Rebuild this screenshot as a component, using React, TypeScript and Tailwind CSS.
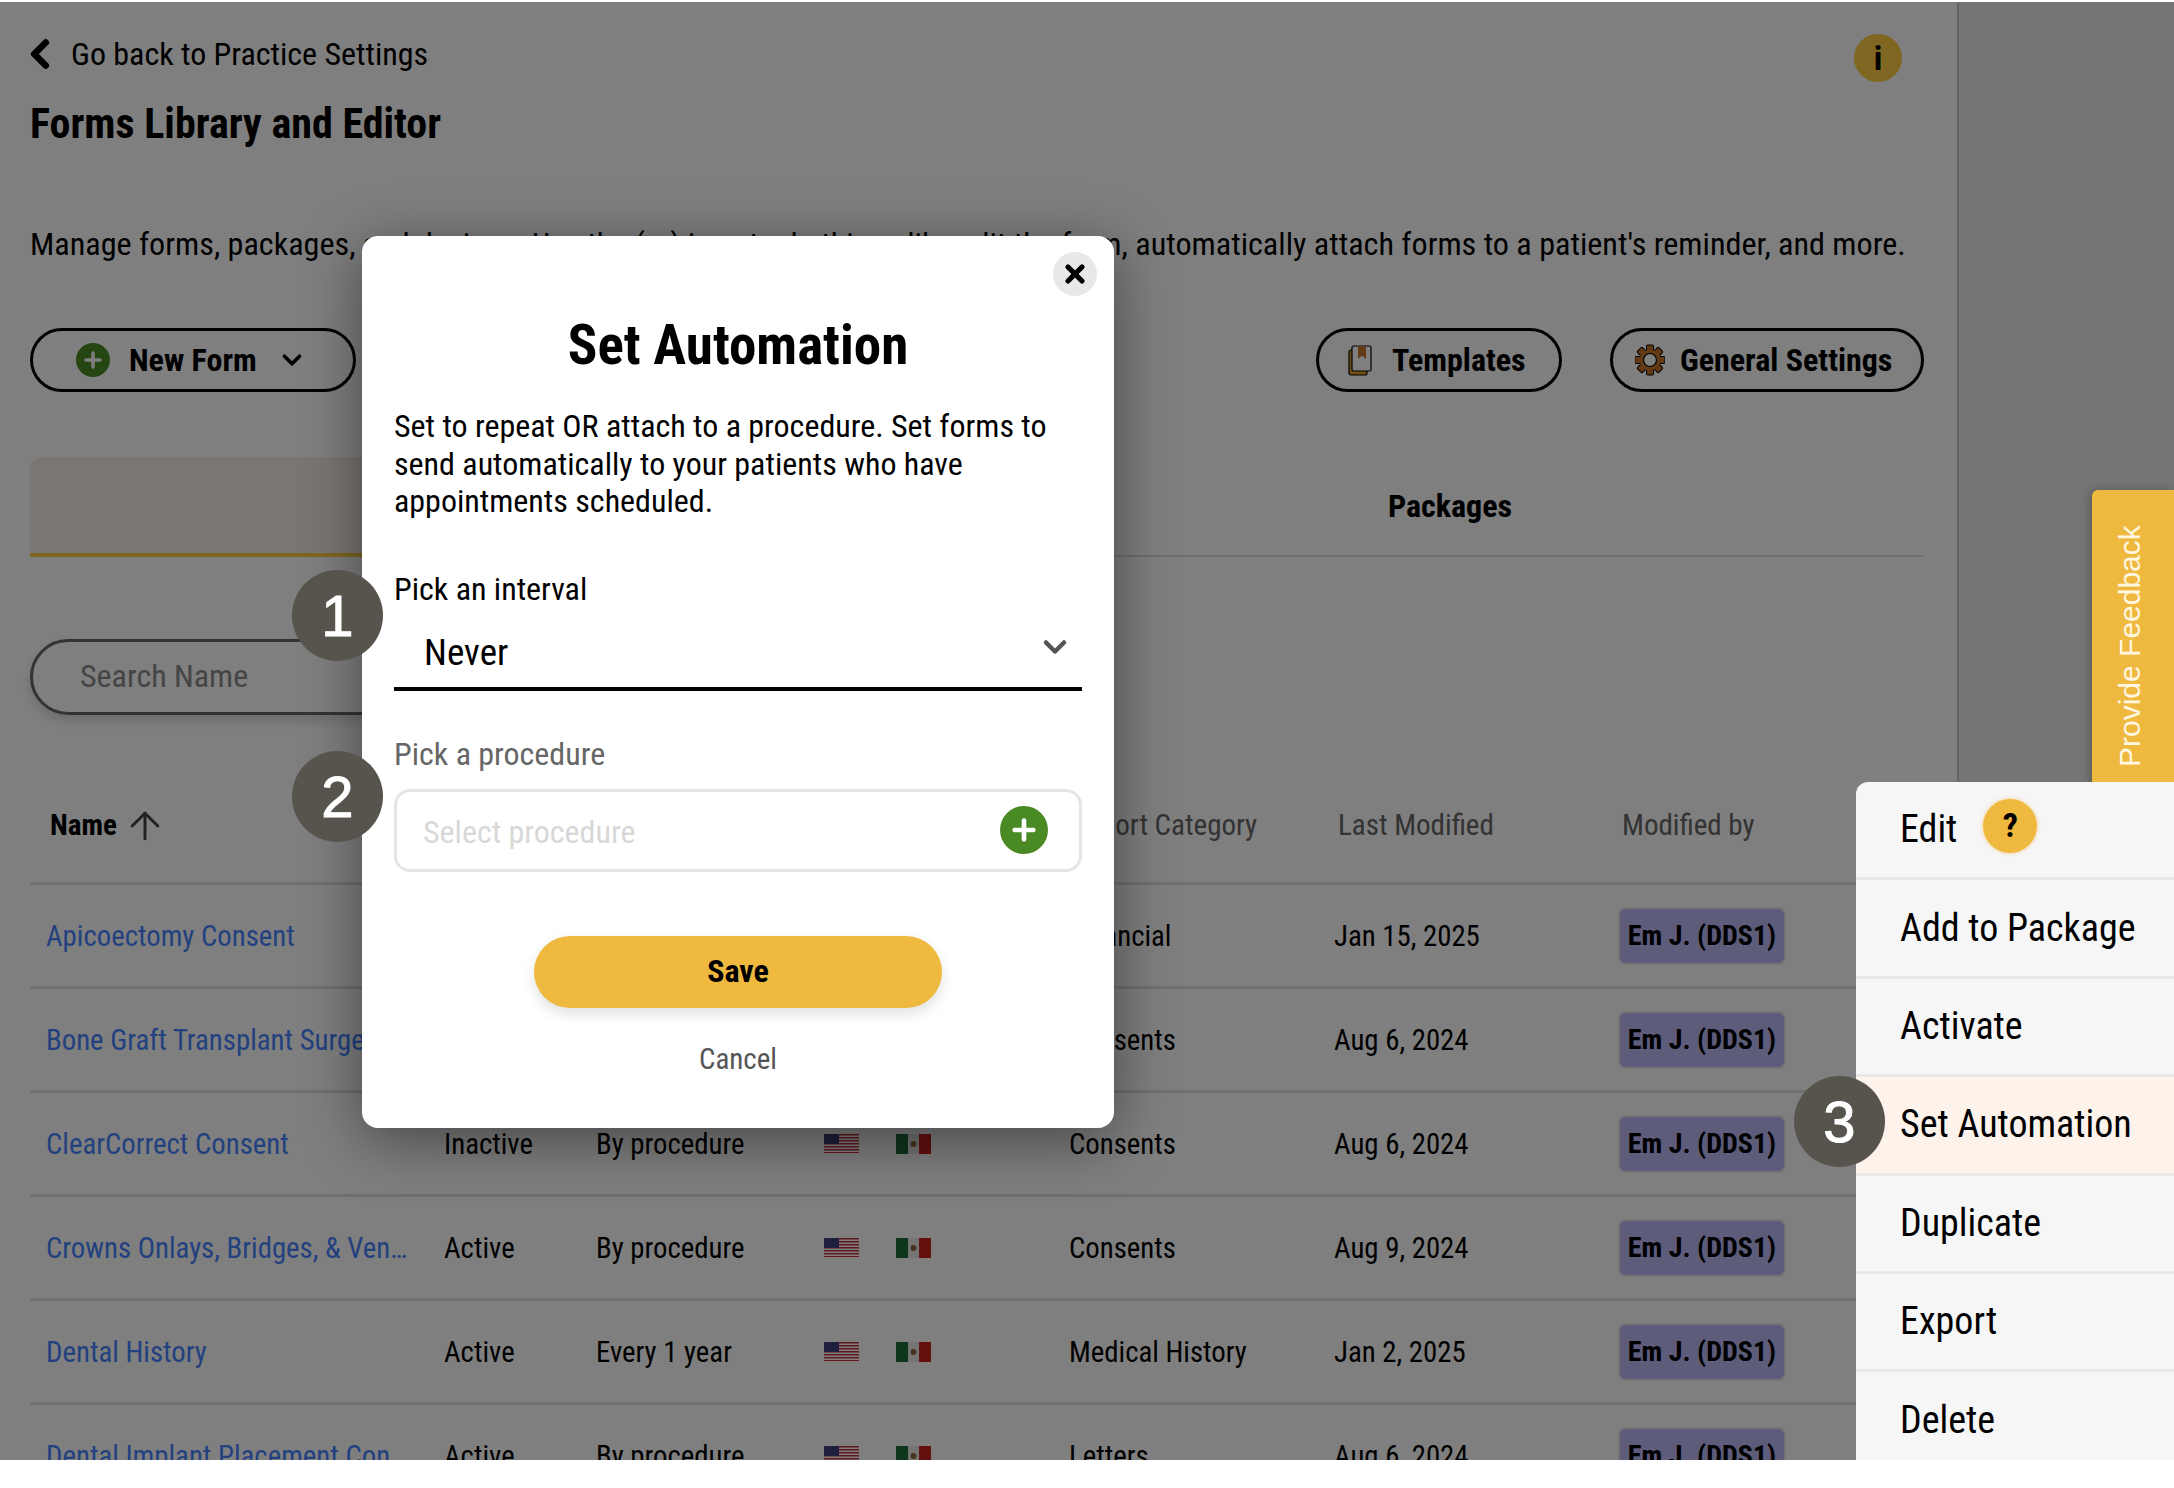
import { ChevronDown, ChevronLeft, ArrowUp, Plus, X } from "lucide-react";

const rows = [
  { name: "Apicoectomy Consent", status: "Inactive", when: "By procedure", category: "Financial", date: "Jan 15, 2025" },
  { name: "Bone Graft Transplant Surgery", status: "Active", when: "By procedure", category: "Consents", date: "Aug 6, 2024" },
  { name: "ClearCorrect Consent", status: "Inactive", when: "By procedure", category: "Consents", date: "Aug 6, 2024" },
  { name: "Crowns Onlays, Bridges, & Ven…", status: "Active", when: "By procedure", category: "Consents", date: "Aug 9, 2024" },
  { name: "Dental History", status: "Active", when: "Every 1 year", category: "Medical History", date: "Jan 2, 2025" },
  { name: "Dental Implant Placement Con…", status: "Active", when: "By procedure", category: "Letters", date: "Aug 6, 2024" },
];

const menuItems = ["Edit", "Add to Package", "Activate", "Set Automation", "Duplicate", "Export", "Delete"];

const gridCols = "grid grid-cols-[414px_152px_228px_72px_173px_265px_285px_1fr] items-center";

function UsFlag() {
  return (
    <svg width="35" height="19" viewBox="0 0 35 19">
      <rect width="35" height="19" fill="#fff" />
      {[0, 3, 6, 9, 12, 15, 18].map((y) => (
        <rect key={y} y={y} width="35" height="1.5" fill="#c0303f" />
      ))}
      <rect width="15" height="10" fill="#3c3f78" />
    </svg>
  );
}

function MxFlag() {
  return (
    <svg width="35" height="20" viewBox="0 0 35 20">
      <rect width="12" height="20" fill="#1f6b3a" />
      <rect x="12" width="11" height="20" fill="#e8e8e8" />
      <rect x="23" width="12" height="20" fill="#c8211f" />
      <circle cx="17.5" cy="10" r="3" fill="#8a6a3a" />
    </svg>
  );
}

function Gear() {
  return (
    <svg width="30" height="32" viewBox="0 0 30 32">
      {[0, 45, 90, 135, 180, 225, 270, 315].map((r) => (
        <rect key={r} x="11.5" y="1" width="7" height="8" rx="1" fill="#c8742c" stroke="#000" strokeWidth="1" transform={`rotate(${r} 15 16)`} />
      ))}
      <circle cx="15" cy="16" r="10.5" fill="#c8742c" />
      <circle cx="15" cy="16" r="6.5" fill="#fff" stroke="#000" strokeWidth="1.2" />
    </svg>
  );
}

function BookIcon() {
  return (
    <svg width="24" height="31" viewBox="0 0 24 31">
      <rect x="1" y="5" width="18" height="25" rx="2" fill="#e0a02b" stroke="#000" strokeWidth="1.2" />
      <rect x="4" y="1" width="19" height="25" rx="1.5" fill="#fff" stroke="#000" strokeWidth="1.2" />
      <path d="M10 1h8v13l-4-3.5L10 14z" fill="#c8742c" />
    </svg>
  );
}

function PillButton({ className, children }: { className: string; children: React.ReactNode }) {
  return (
    <button className={`flex h-[64px] items-center rounded-full border-[3px] border-black text-[32px] font-bold ${className}`}>
      {children}
    </button>
  );
}

function StepBadge({ n, className }: { n: number; className: string }) {
  return (
    <div className={`absolute flex h-[91px] w-[91px] items-center justify-center rounded-full bg-[#57544d] font-['Liberation_Sans',sans-serif] text-[58px] text-white [-webkit-text-stroke:1px_white] ${className}`}>
      {n}
    </div>
  );
}

export default function App() {
  return (
    <div className="relative h-[1488px] w-[2174px] overflow-hidden bg-white font-['Roboto',sans-serif] font-stretch-condensed text-black">
      <div className="relative mt-[2px] h-[1458px] overflow-hidden">
        <div className="flex h-full">
          <main className="w-[1957px] shrink-0 px-[30px] pt-[32px]">
            <div className="flex h-[40px] items-center justify-between pr-[25px]">
              <div className="flex items-center text-[32px]">
                <ChevronLeft size={46} strokeWidth={3.5} className="-ml-[13px] mr-[8px]" />
                Go back to Practice Settings
              </div>
              <div className="mt-[8px] flex h-[48px] w-[48px] items-center justify-center rounded-full bg-[#ffcf44] text-[34px] font-bold">i</div>
            </div>
            <h1 className="mt-[26px] text-[42px] leading-[48px] font-bold">Forms Library and Editor</h1>
            <p className="mt-[76px] text-[32.15px] leading-[40px] whitespace-nowrap">
              Manage forms, packages, and designs. Use the (...) icon to do things like edit the form, automatically attach forms to a patient's reminder, and more.
            </p>
            <div className="mt-[64px] flex justify-between pr-[3px]">
              <PillButton className="w-[326px] pl-[43px]">
                <span className="flex h-[34px] w-[34px] items-center justify-center rounded-full bg-[#4a8a24] text-white">
                  <Plus size={24} strokeWidth={3.5} />
                </span>
                <span className="ml-[19px]">New Form</span>
                <ChevronDown size={30} strokeWidth={3} className="ml-[20px]" />
              </PillButton>
              <div className="flex gap-[48px]">
                <PillButton className="w-[246px] pl-[29px]">
                  <BookIcon />
                  <span className="ml-[20px]">Templates</span>
                </PillButton>
                <PillButton className="w-[314px] pl-[22px]">
                  <Gear />
                  <span className="ml-[15px]">General Settings</span>
                </PillButton>
              </div>
            </div>
            <div className="mt-[65px] flex h-[100px] w-[1894px] border-b-[2px] border-[#dedede]">
              <div className="flex h-[100px] w-[946px] items-center justify-center rounded-t-xl border-b-[4px] border-[#ffcf44] bg-[#f6ece2] text-[32px] font-bold">
                Forms
              </div>
              <div className="flex h-[98px] w-[948px] items-center justify-center text-[32px] font-bold">Packages</div>
            </div>
            <div className="mt-[82px] flex h-[76px] w-[480px] items-center rounded-full border-[3px] border-[#666] pb-[2px] pl-[47px] text-[32px] text-[#8a8a8a] shadow-[0_6px_12px_rgba(0,0,0,0.15)]">
              Search Name
            </div>
            <div className="mt-[54px] w-[1894px]">
              <div className={`${gridCols} h-[116px] border-b-[3px] border-[#dedede] text-[29px] text-[#666]`}>
                <div className="flex items-center pl-[20px] font-bold text-black">
                  Name
                  <ArrowUp size={44} strokeWidth={1.6} className="ml-[6px] text-[#444]" />
                </div>
                <div>Status</div>
                <div className="col-span-3">Automation</div>
                <div className="pl-[3px]">Report Category</div>
                <div className="pl-[4px]">Last Modified</div>
                <div className="pl-[3px]">Modified by</div>
              </div>
              {rows.map((row) => (
                <div key={row.name} className={`${gridCols} h-[104px] border-b-[3px] border-[#dedede] text-[28.8px]`}>
                  <div className="truncate pt-[3px] pl-[16px] text-[#4682ff]">{row.name}</div>
                  <div className="pt-[3px]">{row.status}</div>
                  <div className="pt-[3px]">{row.when}</div>
                  <div><UsFlag /></div>
                  <div><MxFlag /></div>
                  <div className="pt-[3px]">{row.category}</div>
                  <div className="pt-[3px]">{row.date}</div>
                  <div className="-ml-[1px] flex h-[58px] w-[168px] items-center justify-center rounded-lg border-2 border-[#e8e8e8] bg-[#bab8f4] text-[28px] font-bold">
                    Em J. (DDS1)
                  </div>
                </div>
              ))}
            </div>
          </main>
          <aside className="flex-1 border-l-2 border-[#c8c8c8] bg-[#ebebeb]" />
        </div>

        {/* dim layer behind the modal */}
        <div className="absolute inset-0 bg-black/50" />

        <div className="absolute top-[488px] left-[2092px] flex h-[320px] w-[82px] justify-center rounded-tl-md bg-[#efb83f] pt-[37px] pr-[6px] shadow-[-2px_0_8px_rgba(0,0,0,0.25)]">
          <span className="h-[240px] rotate-180 font-['Liberation_Sans',sans-serif] text-[30px] leading-[36px] font-normal whitespace-nowrap text-[#fff7e0] [font-stretch:normal] [writing-mode:vertical-rl]">
            Provide Feedback
          </span>
        </div>

        <div className="absolute top-[234px] left-[362px] h-[892px] w-[752px] rounded-2xl bg-white px-[32px] pt-[79px] shadow-[0_12px_60px_rgba(0,0,0,0.45)]">
          <button className="absolute top-[16px] right-[17px] flex h-[44px] w-[44px] items-center justify-center rounded-full bg-[#e8e8e8]">
            <X size={28} strokeWidth={4.5} />
          </button>
          <h2 className="text-center text-[55px] leading-[60px] font-bold">Set Automation</h2>
          <p className="mt-[33px] text-[32px] leading-[37.5px]">
            Set to repeat OR attach to a procedure. Set forms to send automatically to your patients who have appointments scheduled.
          </p>
          <div className="mt-[50px] text-[32px] leading-[36px]">Pick an interval</div>
          <div className="flex h-[84px] items-center justify-between border-b-4 border-black pr-[9px] pl-[30px]">
            <span className="pt-[13px] text-[37px]">Never</span>
            <ChevronDown size={36} strokeWidth={3} className="text-[#555]" />
          </div>
          <div className="mt-[45px] text-[32px] leading-[36px] text-[#666]">Pick a procedure</div>
          <div className="mt-[17px] flex h-[83px] items-center justify-between rounded-2xl border-[3px] border-[#e5e5e5] pr-[31px] pl-[26px]">
            <span className="pt-[3px] text-[32px] text-[#d8d8d8]">Select procedure</span>
            <span className="flex h-[48px] w-[48px] items-center justify-center rounded-full bg-[#4a8a24] text-white">
              <Plus size={32} strokeWidth={3.5} />
            </span>
          </div>
          <button className="mx-auto mt-[64px] flex h-[72px] w-[408px] items-center justify-center rounded-full bg-[#efb83f] pb-[2px] text-[32px] font-bold shadow-[0_6px_14px_rgba(0,0,0,0.12)]">
            Save
          </button>
          <div className="mt-[33px] text-center text-[29px] leading-[36px] text-[#555]">Cancel</div>
        </div>

        <StepBadge n={1} className="top-[568px] left-[292px]" />
        <StepBadge n={2} className="top-[749px] left-[292px]" />

        <div className="absolute top-[780px] left-[1856px] w-[318px] overflow-hidden rounded-tl-xl rounded-bl-xl bg-[#f6f6f6] text-[38px]">
          {menuItems.map((item) => (
            <div
              key={item}
              className={`flex h-[98.4px] items-center border-b-[3px] border-[#e8e8e8] pl-[44px] ${item === "Set Automation" ? "bg-[#fdf3ea]" : ""}`}
            >
              {item}
              {item === "Edit" && (
                <span className="ml-[26px] -mt-[8px] flex h-[54px] w-[54px] items-center justify-center rounded-full bg-[#efb83f] text-[34px] font-bold shadow-[0_0_4px_rgba(239,184,63,0.6)]">
                  ?
                </span>
              )}
            </div>
          ))}
        </div>

        <StepBadge n={3} className="top-[1074px] left-[1794px]" />
      </div>
    </div>
  );
}
